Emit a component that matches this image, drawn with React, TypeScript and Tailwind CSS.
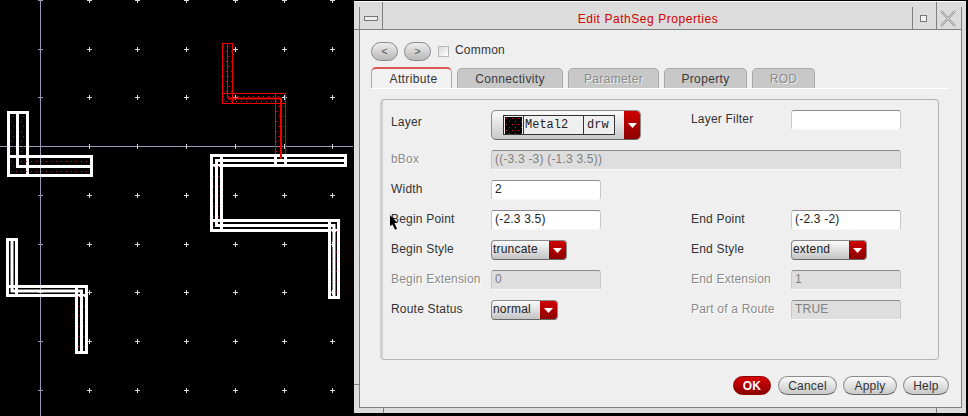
import type { ReactNode } from "react";

const gridX = [89, 137, 186, 235, 284, 332];
const gridY = [0, 49, 97, 195, 244, 292, 341, 390];

// segments of each path: outline boxes plus a centre line
const whitePaths = [
  {
    boxes: [
      [7, 111, 22, 66],
      [7, 155, 86, 22],
    ],
    centre: "M17.5 111V166.5H93",
    width: 3,
  },
  {
    boxes: [
      [210, 154, 137, 13],
      [210, 154, 13, 78],
      [210, 219, 130, 13],
      [328, 219, 12, 80],
    ],
    centre: "M347 160.5H216.5V225.5H334V299",
    width: 3,
  },
  {
    boxes: [
      [6, 238, 12, 59],
      [6, 285, 82, 12],
      [75, 285, 13, 69],
    ],
    centre: "M12 238V291H81.5V354",
    width: 3,
  },
];

function LayoutCanvas() {
  return (
    <svg width="354" height="416" className="block shrink-0" viewBox="0 0 354 416">
      <defs>
        <pattern id="dots" width="10" height="10" patternUnits="userSpaceOnUse">
          <rect x="1" y="1" width="1" height="1" fill="#c01030" />
          <rect x="6" y="1" width="1" height="1" fill="#c01030" />
          <rect x="3" y="6" width="1" height="1" fill="#c01030" />
          <rect x="8" y="6" width="1" height="1" fill="#c01030" />
        </pattern>
      </defs>
      <path d="M40.5 0V416M0 146.5H353" stroke="#9a9ab8" strokeWidth="1" />
      {gridY.map((y) => (
        <path key={y} d={`M38 ${y + 0.5}H43`} stroke="#9a9ab8" />
      ))}
      {gridX.map((x) =>
        gridY.map((y) => (
          <path
            key={`${x}-${y}`}
            d={`M${x - 2} ${y + 0.5}H${x + 3}M${x + 0.5} ${y - 2}V${y + 3}`}
            stroke="#dcdcdc"
          />
        )),
      )}
      {gridX.map((x) => (
        <path key={x} d={`M${x + 0.5} 144V149`} stroke="#d0d0d8" />
      ))}

      {/* selected path */}
      <g fill="url(#dots)" stroke="#f00000" strokeWidth="1">
        <rect x="222.5" y="43.5" width="10" height="60" />
        <rect x="222.5" y="93.5" width="63" height="10" />
        <rect x="275.5" y="93.5" width="10" height="66" />
      </g>
      <path d="M227.5 43V98" stroke="#f00000" fill="none" />
      <path d="M228 98.5H281V159" stroke="#f00000" strokeWidth="2" fill="none" />

      {whitePaths.map((p) => (
        <g key={p.centre}>
          {p.boxes.map(([x, y, w, h]) => (
            <rect
              key={`${x}-${y}`}
              x={x + 1.5}
              y={y + 1.5}
              width={w - 3}
              height={h - 3}
              fill="url(#dots)"
              stroke="#fff"
              strokeWidth="3"
            />
          ))}
          <path d={p.centre} fill="none" stroke="#fff" strokeWidth={p.width} />
        </g>
      ))}
      <path d="M275.5 154V167M285.5 154V167" stroke="#fff" strokeWidth="3" />
      <path d="M281 154V158" stroke="#f00000" strokeWidth="2" />
    </svg>
  );
}

function Arrow() {
  return (
    <svg width="9" height="5" viewBox="0 0 9 5">
      <path d="M0 0H9L4.5 5Z" fill="#fff" />
    </svg>
  );
}

function Label({ children, off, low }: { children: ReactNode; off?: boolean; low?: boolean }) {
  return (
    <div
      className={`h-5 flex items-center whitespace-nowrap ${low ? "pt-[3px]" : "pb-[2px]"} ${
        off ? "text-[#8a8a8a] [text-shadow:1px_1px_0_#fff]" : "text-[#333333]"
      }`}
    >
      {children}
    </div>
  );
}

function Field({ value, off, wide }: { value?: string; off?: boolean; wide?: boolean }) {
  return (
    <div
      className={`h-5 flex items-center pl-[3px] pb-[2px] rounded-[3px] border border-t-[#8c8c8c] border-x-[#c8c8c8] border-b-[#f8f8f8] ${
        off ? "bg-[#dedede] text-[#808080]" : "bg-white text-[#222222]"
      } ${wide ? "col-span-4" : ""}`}
    >
      {value}
    </div>
  );
}

function Drop({ value, w }: { value: string; w: string }) {
  return (
    <div
      className={`h-5 flex rounded-[4px] overflow-hidden border border-[#8a8a8a] border-b-[#666666] bg-gradient-to-b from-[#fbfbfb] to-[#c4c4c4] text-[#222222] ${w}`}
    >
      <span className="flex-1 pl-px pb-[2px] flex items-center">{value}</span>
      <span className="w-[17px] flex items-center justify-center bg-gradient-to-b from-[#d00000] to-[#8c0000]">
        <Arrow />
      </span>
    </div>
  );
}

function Tab({ label, w, off, active }: { label: string; w: string; off?: boolean; active?: boolean }) {
  return (
    <div
      className={`h-5 flex items-center justify-center rounded-t-[5px] border-x border-[#a8a8a8] tracking-[0.35px] ${w} ${
        active
          ? "bg-[#f2f2f2] border-t-2 border-t-[#d85a5a] text-[#333333] -mt-px h-[21px] pl-[4px]"
          : off
            ? "bg-[#c8c8c8] border-t border-t-[#a8a8a8] text-[#8a8a8a] [text-shadow:1px_1px_0_#eee]"
            : "bg-[#c8c8c8] border-t border-t-[#a8a8a8] text-[#3a3a3a]"
      }`}
    >
      {label}
    </div>
  );
}

function Button({ label, w, red }: { label: string; w: string; red?: boolean }) {
  return (
    <div
      className={`h-[19px] flex items-center justify-center rounded-full border ${w} ${
        red
          ? "bg-gradient-to-b from-[#d80000] to-[#8c0000] border-[#8c0000] text-white font-bold"
          : "bg-gradient-to-b from-[#fbfbfb] to-[#c8c8c8] border-[#8a8a8a] border-b-[#666666] text-[#333333]"
      }`}
    >
      {label}
    </div>
  );
}

function NavButton({ label }: { label: string }) {
  return (
    <div className="w-[27px] h-[19px] flex items-center justify-center rounded-full border border-[#8a8a8a] bg-gradient-to-b from-[#eeeeee] to-[#b8b8b8] text-[#555555] text-[11px]">
      {label}
    </div>
  );
}

function PropertiesWindow() {
  return (
    <div className="relative w-[612px] h-[412px] mt-px shrink-0 flex flex-col bg-[#dcdcdc] border-t border-white pt-[5px] pl-[5px] pr-[4px] pb-[5px] font-['Liberation_Sans',Arial,sans-serif] text-[12px] tracking-[0.2px]">
      <div className="flex-1 flex flex-col border-x border-b border-[#808080] bg-[#efefef]">
        {/* title bar */}
        <div className="h-[23px] shrink-0 flex bg-[#dcdcdc] border-b border-[#808080]">
          <div className="w-[23px] flex items-center justify-center border-r border-[#808080]">
            <div className="w-[14px] h-[5px] border border-[#777777] bg-[#eeeeee]" />
          </div>
          <div className="flex-1 flex items-center justify-center pt-[2px] pl-[1px] text-[#d00000] tracking-[0.55px]">
            Edit PathSeg Properties
          </div>
          <div className="w-[25px] flex items-center justify-center pr-[3px] border-x border-[#808080]">
            <div className="w-[7px] h-[7px] border border-[#777777] bg-[#f4f4f4]" />
          </div>
          <div className="w-[24px] flex items-center pl-[3px]">
            <svg width="16" height="17" viewBox="0 0 16 17">
              <path d="M1 1L15 16M15 1L1 16" stroke="#8a8a8a" strokeWidth="2" />
              <path d="M1 1L15 16M15 1L1 16" stroke="#f6f6f6" strokeWidth="0.8" />
            </svg>
          </div>
        </div>

        <div className="flex-1 flex flex-col pl-[11px] pr-[12px] pt-[11px]">
          <div className="flex items-center gap-[6px] h-5">
            <NavButton label="<" />
            <NavButton label=">" />
            <div className="w-[11px] h-[11px] ml-px border border-[#b8b8b8] bg-gradient-to-br from-[#d8d8d8] to-white" />
            <span className="text-[#333333] pb-[2px]">Common</span>
          </div>

          <div className="flex gap-[5px] mt-[7px] h-5 items-end border-b border-white box-content">
            <Tab label="Attribute" w="w-[81px]" active />
            <Tab label="Connectivity" w="w-[106px]" />
            <Tab label="Parameter" w="w-[91px]" off />
            <Tab label="Property" w="w-[83px]" />
            <Tab label="ROD" w="w-[63px]" off />
          </div>

          {/* attribute panel */}
          <div className="ml-[9px] mr-[10px] mt-[10px] h-[261px] rounded-[4px] border border-[#b4b4b4] border-l-[3px] border-l-[#d0d0d0] pl-2 pt-[10px]">
            <div className="grid grid-cols-[100px_110px_90px_100px_110px] gap-y-[10px]">
              <Label low>Layer</Label>
              <div className="col-span-2">
                <div className="w-[150px] h-[30px] flex rounded-[5px] overflow-hidden border border-[#8a8a8a] border-b-[#666666] bg-gradient-to-b from-[#fbfbfb] to-[#c8c8c8]">
                  <div className="flex-1 pl-[11px] flex items-center">
                    <div className="flex h-5 w-[112px] border border-[#333333] font-['Liberation_Mono',monospace] text-[12px] tracking-normal text-[#222222] bg-[#efefef]">
                      <div className="w-5 border-r border-[#333333] flex items-center justify-center">
                        <svg width="17" height="17" viewBox="0 0 17 17">
                          <defs>
                            <pattern id="swatch" width="6" height="6" patternUnits="userSpaceOnUse">
                              <rect width="6" height="6" fill="#000" />
                              <rect x="1" y="1" width="1" height="1" fill="#e01030" />
                              <rect x="4" y="4" width="1" height="1" fill="#e01030" />
                            </pattern>
                          </defs>
                          <rect width="17" height="17" fill="url(#swatch)" />
                        </svg>
                      </div>
                      <div className="w-[60px] border-r border-[#333333] pl-px flex items-center">Metal2</div>
                      <div className="flex-1 pl-[3px] flex items-center">drw</div>
                    </div>
                  </div>
                  <span className="w-4 flex items-center justify-center bg-gradient-to-b from-[#d00000] to-[#8c0000]">
                    <Arrow />
                  </span>
                </div>
              </div>
              <Label>Layer Filter</Label>
              <Field />

              <Label off>bBox</Label>
              <Field value="((-3.3 -3) (-1.3 3.5))" off wide />

              <Label>Width</Label>
              <Field value="2" />
              <div className="col-span-3" />

              <Label>Begin Point</Label>
              <Field value="(-2.3 3.5)" />
              <div />
              <Label>End Point</Label>
              <Field value="(-2.3 -2)" />

              <Label>Begin Style</Label>
              <Drop value="truncate" w="w-[76px]" />
              <div />
              <Label>End Style</Label>
              <Drop value="extend" w="w-[76px]" />

              <Label off>Begin Extension</Label>
              <Field value="0" off />
              <div />
              <Label off>End Extension</Label>
              <Field value="1" off />

              <Label>Route Status</Label>
              <Drop value="normal" w="w-[67px]" />
              <div />
              <Label off>Part of a Route</Label>
              <Field value="TRUE" off />
            </div>
          </div>

          <div className="flex justify-end gap-[6px] mt-[16px]">
            <Button label="OK" w="w-[38px] mr-px" red />
            <Button label="Cancel" w="w-[59px]" />
            <Button label="Apply" w="w-[54px]" />
            <Button label="Help" w="w-[46px]" />
          </div>
        </div>
      </div>

      {/* frame corner ticks */}
      <div className="absolute left-[28px] top-0 w-px h-[5px] bg-[#808080]" />
      <div className="absolute left-[582px] top-0 w-px h-[5px] bg-[#808080]" />
      <div className="absolute left-0 top-[27px] w-[5px] h-px bg-[#808080]" />
      <div className="absolute left-0 top-[382px] w-[5px] h-px bg-[#808080]" />
      <div className="absolute left-[29px] bottom-0 w-px h-[5px] bg-[#808080]" />
      <div className="absolute left-[582px] bottom-0 w-px h-[5px] bg-[#808080]" />

      {/* mouse pointer */}
      <svg className="absolute left-[36px] top-[213px]" width="8" height="15" viewBox="0 0 8 15">
        <path d="M0 0L7.5 8H4.5L7 14L5 14.5L2.5 9.5L0 11Z" fill="#000" />
      </svg>
    </div>
  );
}

export default function App() {
  return (
    <div className="w-[968px] h-[416px] bg-black overflow-hidden flex">
      <LayoutCanvas />
      <PropertiesWindow />
    </div>
  );
}
